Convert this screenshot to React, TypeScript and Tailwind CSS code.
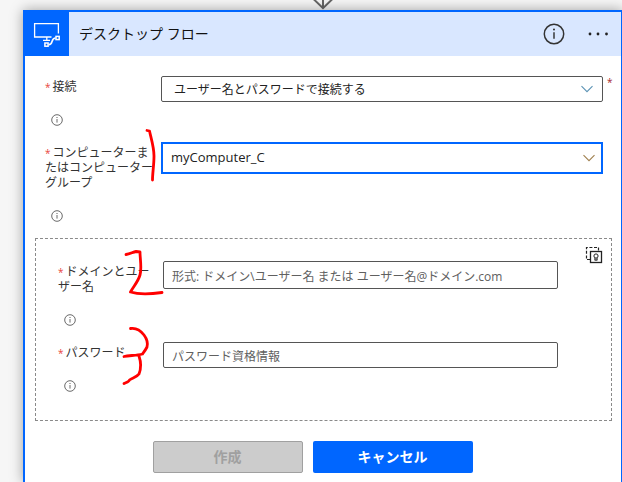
import React, { useState } from 'react';

const InfoIcon: React.FC<{ className?: string }> = ({ className }) => (
  <svg viewBox="0 0 12 12" fill="none" className={className} aria-hidden="true">
    <circle cx="6" cy="6" r="5.3" stroke="currentColor" strokeWidth="0.8" />
    <path d="M6 5v3.6" stroke="currentColor" strokeWidth="0.8" />
    <circle cx="6" cy="3.5" r="0.55" fill="currentColor" />
  </svg>
);

const Chevron: React.FC<{ className: string }> = ({ className }) => (
  <svg
    viewBox="0 0 14 8"
    fill="none"
    stroke="currentColor"
    className={`pointer-events-none absolute w-3.5 h-2 ${className}`}
    aria-hidden="true"
  >
    <path d="M1.5 1.2L7 6.7L12.5 1.2" strokeWidth="1.1" />
  </svg>
);

const DesktopFlowIcon = () => (
  <svg viewBox="0 0 30 30" fill="none" stroke="white" strokeWidth="1.3" className="w-[30px] h-[30px]" aria-hidden="true">
    <path d="M19.5 18H2.6V4.6H26.4V14.5" />
    <path d="M11 21.4h7M14.8 18v3.4" />
    <rect x="12.9" y="24" width="3.2" height="3.2" strokeWidth="1.5" />
    <rect x="24" y="17.4" width="3.2" height="3.2" strokeWidth="1.5" />
    <path d="M16.8 25.6C21.5 25.8 18.5 19 23.6 19" strokeWidth="1.6" />
  </svg>
);

const CredentialIcon = () => (
  <svg viewBox="0 0 18 18" fill="none" stroke="#222" className="w-[18px] h-[18px]" aria-hidden="true">
    <path d="M5 13.5H1.5V1.5H13.5V4.5" strokeWidth="1.2" strokeDasharray="3 1.6" />
    <rect x="5.5" y="5.5" width="11" height="11" strokeWidth="1.3" fill="white" />
    <circle cx="11" cy="10" r="2.1" strokeWidth="1" />
    <path d="M9.8 12v2.3h2.4V12M9.8 13.2h2.4" strokeWidth="0.8" />
  </svg>
);

interface FieldLabelProps {
  htmlFor: string;
  children: React.ReactNode;
  className: string;
}

const FieldLabel: React.FC<FieldLabelProps> = ({ htmlFor, children, className }) => (
  <label htmlFor={htmlFor} className={`shrink-0 pt-[3px] text-xs leading-[15px] text-[#333] ${className}`}>
    <span className="text-[10px] leading-none text-[#e8453c] mr-0.5">*</span>
    {children}
  </label>
);

const HelpButton = () => (
  <button type="button" aria-label="ヘルプ" className="block w-3 h-3 text-[#444]">
    <InfoIcon className="w-3 h-3" />
  </button>
);

const inputClass =
  'flex-1 min-w-0 px-2 pt-0.5 text-xs bg-white border border-[#555] rounded-xs text-[#222] placeholder:text-[#606060] outline-none';

const App = () => {
  const [user, setUser] = useState('');
  const [password, setPassword] = useState('');

  return (
    <div className="relative min-h-screen flex flex-col overflow-hidden bg-[#f6f6f6] font-['Open_Sans','Noto_Sans_CJK_JP',sans-serif]">
      <div className="h-2.5 pl-6 flex justify-center">
        <svg viewBox="0 0 22 10" fill="none" stroke="#666" strokeWidth="2" className="w-[22px] h-2.5" aria-hidden="true">
          <path d="M11 0V8M1.5 -1L11 8.2L20.5 -1" />
        </svg>
      </div>

      <section className="flex-1 flex flex-col ml-[23px] -mr-px bg-white border-2 border-b-0 border-[#0066ff] shadow-[0_0_12px_rgba(0,0,0,0.35)]">
        <header className="flex items-center h-11 bg-[#d9e7ff]">
          <div className="w-11 h-11 flex items-center justify-center bg-[#0066ff]">
            <DesktopFlowIcon />
          </div>
          <h1 className="flex-1 pl-2.5 text-sm text-[#111]">デスクトップ フロー</h1>
          <button type="button" aria-label="情報" className="text-[#333]">
            <InfoIcon className="w-[22px] h-[22px]" />
          </button>
          <button type="button" aria-label="その他" className="ml-5 mr-2.5 text-[#222]">
            <svg viewBox="0 0 26 6" fill="currentColor" className="w-[26px] h-1.5">
              <circle cx="5" cy="3" r="1.4" />
              <circle cx="13" cy="3" r="1.4" />
              <circle cx="21.5" cy="3" r="1.4" />
            </svg>
          </button>
        </header>

        <form className="pt-5 pl-2.5 pr-[9px] pb-2" onSubmit={(e) => e.preventDefault()}>
          <div className="pl-2.5">
            <div className="flex items-start">
              <FieldLabel htmlFor="connection" className="w-[110px] mr-1.5">接続</FieldLabel>
              <div className="relative flex-1 flex items-center">
                <select
                  id="connection"
                  className="w-full h-[26px] pl-3 pr-7 pt-0.5 text-xs text-[#222] bg-white border border-[#555] rounded-xs appearance-none outline-none"
                >
                  <option>ユーザー名とパスワードで接続する</option>
                </select>
                <Chevron className="right-[9px] text-[#5c93b5]" />
              </div>
              <span className="w-[9px] pl-1 text-[10px] leading-3 text-[#a4262c]">*</span>
            </div>
            <div className="pl-1.5 pt-3 pb-4"><HelpButton /></div>

            <div className="flex items-start">
              <FieldLabel htmlFor="machine" className="w-[110px] mr-1.5">
                コンピューターまたはコンピューター グループ
              </FieldLabel>
              <div className="relative flex-1 flex items-center mr-[9px]">
                <select
                  id="machine"
                  className="w-full h-8 pl-2 pr-7 text-[13px] text-[#222] bg-white border-2 border-[#0066ff] appearance-none outline-none"
                >
                  <option>myComputer_C</option>
                </select>
                <Chevron className="right-[7px] text-[#a08050]" />
              </div>
            </div>
            <div className="pl-1.5 pt-5 pb-4"><HelpButton /></div>
          </div>

          <div className="relative pt-[22px] pl-[22px] pr-[53px] pb-7 border border-dashed border-[#8a8a8a]">
            <button type="button" aria-label="資格情報" className="absolute top-[7px] right-2">
              <CredentialIcon />
            </button>
            <div className="flex items-start">
              <FieldLabel htmlFor="user" className="w-[100px] mr-[5px]">ドメインとユーザー名</FieldLabel>
              <input
                id="user"
                type="text"
                value={user}
                onChange={(e) => setUser(e.target.value)}
                placeholder="形式: ドメイン\ユーザー名 または ユーザー名@ドメイン.com"
                className={`${inputClass} h-7`}
              />
            </div>
            <div className="pl-1.5 pt-5 pb-4"><HelpButton /></div>
            <div className="flex items-start">
              <FieldLabel htmlFor="password" className="w-[100px] mr-[5px]">パスワード</FieldLabel>
              <input
                id="password"
                type="password"
                value={password}
                onChange={(e) => setPassword(e.target.value)}
                placeholder="パスワード資格情報"
                className={`${inputClass} h-[26px]`}
              />
            </div>
            <div className="pl-1.5 pt-3"><HelpButton /></div>
          </div>

          <div className="flex justify-center gap-2.5 pt-5 pr-[22px]">
            <button
              type="button"
              disabled
              className="w-[150px] h-8 text-sm font-semibold text-[#a0a0a0] bg-[#cccccc] border border-[#a0a0a0] rounded-xs"
            >
              作成
            </button>
            <button type="button" className="w-40 h-8 text-sm font-bold text-white bg-[#0066ff] rounded-xs">
              キャンセル
            </button>
          </div>
        </form>
      </section>

      {/* hand-drawn step marks */}
      <svg
        viewBox="0 0 180 400"
        fill="none"
        stroke="#ff0000"
        strokeWidth="2.8"
        strokeLinecap="round"
        strokeLinejoin="round"
        className="absolute top-0 left-0 w-[180px] h-[400px] pointer-events-none"
        aria-hidden="true"
      >
        <path d="M147 130.5L149.500 131C151 138 154 147 154 156C154 165 152.5 173 152.5 180" />
        <path d="M126 254.5C130 254 133 252 136 251.5L140 252C140 259 142 268 140 275C138 282 133 287 130.5 292C137 294 151 294 162 292.5" />
        <path d="M130.5 328.5C137 327.5 141 331 144 335C147 339 148 343 147 347C145 351 143 353 142.5 354C136 356 129 355 124 356.5M139 356C141 362 141 369 139 374C137 377 132 378 129.5 380C129 382 126 382.5 124 383.5" />
      </svg>
    </div>
  );
};

export default App;
